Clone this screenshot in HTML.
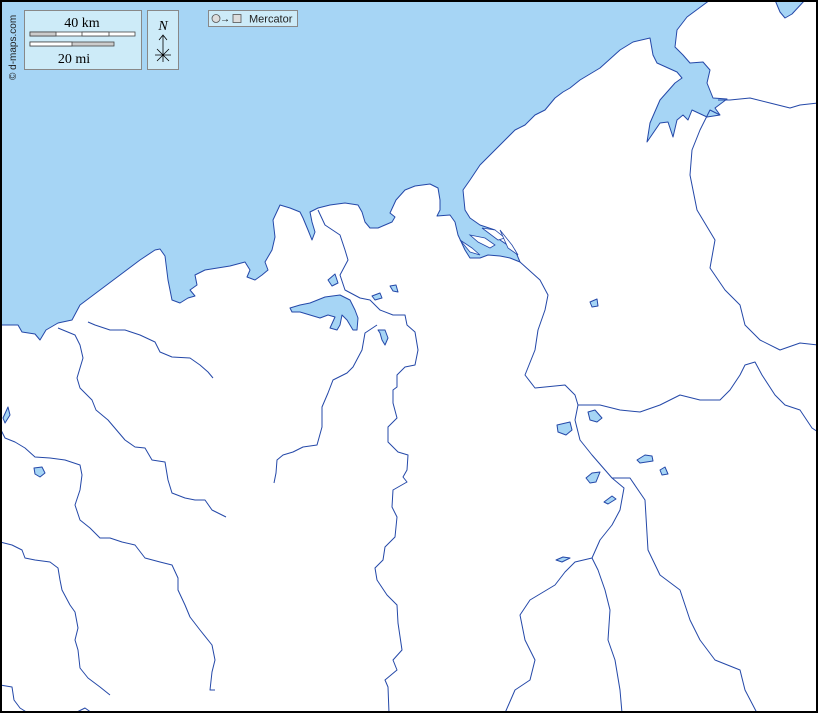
<!DOCTYPE html>
<html><head><meta charset="utf-8"><style>
html,body{margin:0;padding:0;background:#fff}
svg{display:block}
</style></head><body>
<svg width="818" height="713" viewBox="0 0 818 713" xmlns="http://www.w3.org/2000/svg">
<rect width="818" height="713" fill="#fff"/>
<g fill="#a6d5f5" stroke="#2448a8" stroke-width="1" stroke-linejoin="round">
<path d="M0,0 L0,325 L18,325 L22,332 L35,334 L40,340 L46,330 L58,323 L72,320 L80,305 L100,290 L120,275 L140,260 L155,250 L160,249 L165,256 L168,280 L172,300 L180,303 L188,298 L195,296 L190,290 L197,285 L195,275 L205,270 L230,266 L245,262 L250,270 L247,277 L255,280 L262,275 L268,270 L265,262 L272,250 L275,237 L273,220 L280,205 L290,208 L300,212 L303,218 L308,230 L312,240 L315,232 L312,222 L310,212 L318,208 L330,205 L345,203 L358,205 L362,212 L365,222 L370,228 L378,228 L385,225 L392,222 L395,217 L390,213 L396,200 L405,190 L415,186 L430,184 L438,188 L440,200 L440,210 L437,216 L450,215 L455,222 L458,235 L465,250 L470,258 L480,258 L488,255 L500,256 L510,258 L520,262 L515,250 L500,240 L495,230 L480,225 L470,218 L465,210 L463,190 L470,180 L480,165 L490,155 L505,140 L515,130 L525,125 L535,115 L545,110 L555,98 L563,92 L570,88 L580,80 L600,68 L620,50 L633,42 L650,38 L653,55 L657,63 L677,72 L682,78 L675,83 L660,100 L650,123 L647,142 L660,123 L668,122 L673,137 L677,120 L683,115 L688,120 L692,110 L707,117 L720,115 L715,108 L727,99 L713,98 L707,83 L710,70 L703,62 L690,63 L683,55 L675,47 L677,30 L687,17 L710,0 Z"/>
<path d="M775,0 L780,12 L785,18 L792,14 L805,0 Z"/>
<path d="M290,308 L300,305 L310,303 L325,297 L340,295 L350,300 L355,310 L358,318 L357,330 L353,330 L347,320 L342,315 L340,325 L337,330 L330,328 L335,317 L328,315 L320,318 L310,315 L300,312 L292,312 Z"/>
<path d="M378,330 L385,330 L388,338 L385,345 L382,340 L380,333 Z"/>
<path d="M8,407 L10,415 L5,423 L3,418 Z"/>
<path d="M34,468 L42,467 L45,473 L40,477 L35,474 Z"/>
<path d="M328,280 L335,274 L338,283 L332,286 Z"/>
<path d="M372,296 L380,293 L382,298 L375,300 Z"/>
<path d="M390,286 L396,285 L398,292 L393,291 Z"/>
<path d="M590,302 L597,299 L598,306 L592,307 Z"/>
<path d="M588,412 L595,410 L602,418 L597,422 L590,420 Z"/>
<path d="M557,425 L570,422 L572,430 L566,435 L558,432 Z"/>
<path d="M637,460 L645,455 L652,456 L653,461 L640,463 Z"/>
<path d="M660,470 L665,467 L668,474 L662,475 Z"/>
<path d="M586,478 L592,473 L600,472 L596,482 L590,483 Z"/>
<path d="M604,502 L612,496 L616,499 L608,504 Z"/>
<path d="M556,560 L563,557 L570,558 L562,562 Z"/>
</g>
<g fill="#fff" stroke="#2448a8" stroke-width="0.8">
<path d="M470,235 L485,238 L495,245 L490,248 L478,242 Z"/>
<path d="M482,228 L495,230 L505,238 L498,240 Z"/>
<path d="M460,240 L472,248 L480,255 L470,252 Z"/>
<path d="M500,230 L512,245 L518,255 L508,248 Z"/>
</g>
<g fill="none" stroke="#2448a8" stroke-width="1" stroke-linejoin="round">
<polyline points="58,328 75,335 80,345 83,358 77,378 80,388 92,400 96,410 108,420 125,440 135,447 145,448 152,460 165,462 168,480 172,493 185,498 195,500 205,500 212,510 226,517"/>
<polyline points="88,322 95,325 110,330 125,330 140,335 155,342 160,352 172,357 190,358 200,365 208,372 213,378"/>
<polyline points="0,428 5,438 15,442 25,448 35,457 50,458 65,460 80,465 82,475 80,490 75,505 80,520 90,528 100,538 110,538 122,542 135,545 145,558 160,562 172,565 178,578 178,590 185,605 190,617 200,630 212,645 215,660 212,672 210,690 215,690"/>
<polyline points="0,542 12,545 22,550 25,558 35,560 50,562 58,568 60,580 62,590 70,605 75,612 78,628 75,640 78,650 80,668 88,678 100,687 110,695"/>
<polyline points="0,685 12,687 14,700 20,708 28,713"/>
<polyline points="75,713 85,708 92,713"/>
<polyline points="377,325 365,333 362,350 353,367 347,373 333,380 328,393 322,407 322,427 317,445 303,447 293,452 283,455 277,460 276,473 274,483"/>
<polyline points="318,210 325,225 340,235 345,250 348,260 340,275 345,290 360,298 370,300 380,310 393,315 405,315 407,325 415,332 418,350 415,365 405,367 397,375 397,387 393,390 393,403 397,418 388,427 388,442 398,452 408,455 407,470 403,477 407,482 393,490 392,507 397,517 395,537 385,547 383,560 375,568 377,580 387,595 397,605 398,623 402,650 393,660 397,670 385,680 388,687 389,713"/>
<polyline points="520,262 540,280 548,295 545,310 538,330 535,350 525,375 535,388 565,385 575,395 578,405 575,420 580,440 592,455 612,478 624,488 620,510 612,525 600,540 592,558 575,562 565,572 555,585 530,600 520,615 525,640 535,660 530,680 515,690 505,713"/>
<polyline points="592,558 598,570 605,590 610,610 608,640 615,660 620,690 622,713"/>
<polyline points="612,478 630,478 645,500 648,550 660,575 680,590 690,620 700,640 715,660 740,670 745,690 757,713"/>
<polyline points="578,405 600,405 620,410 640,412 660,405 680,395 700,400 720,400 730,390 740,375 745,365 755,362 762,375 775,395 785,405 800,410 812,428 818,432"/>
<polyline points="720,115 710,110 700,130 692,150 690,175 697,210 715,240 710,268 725,290 740,305 745,325 760,340 780,350 800,343 818,345"/>
<polyline points="718,100 730,100 750,98 770,103 790,108 800,105 818,103"/>
</g>
<g font-family="Liberation Serif, serif" fill="#000">
<rect x="24.5" y="10.5" width="117" height="59" fill="#cdebf8" stroke="#888"/>
<text x="82" y="27" font-size="14" text-anchor="middle">40 km</text>
<rect x="30" y="32" width="105" height="4" fill="#fff" stroke="#444" stroke-width="0.8"/>
<rect x="30" y="32" width="26" height="4" fill="#ccc" stroke="#444" stroke-width="0.8"/>
<rect x="82" y="32" width="27" height="4" fill="#fff" stroke="#444" stroke-width="0.8"/>
<rect x="30" y="42" width="84" height="4" fill="#ccc" stroke="#444" stroke-width="0.8"/>
<rect x="30" y="42" width="42" height="4" fill="#fff" stroke="#444" stroke-width="0.8"/>
<text x="74" y="63" font-size="14" text-anchor="middle">20 mi</text>
<rect x="147.5" y="10.5" width="31" height="59" fill="#cdebf8" stroke="#888"/>
<text x="163" y="30" font-size="14" font-style="italic" text-anchor="middle">N</text>
<path d="M163,36 V62 M159,40 L163,35 L167,40 M155,55 H171 M157,49 L169,61 M169,49 L157,61" stroke="#000" stroke-width="0.8" fill="none"/>
<rect x="208.5" y="10.5" width="89" height="16" fill="#cdebf8" stroke="#888"/>
<circle cx="216" cy="18.5" r="4" fill="#ddd" stroke="#555" stroke-width="0.8"/>
<text x="220" y="22" font-size="10" font-family="Liberation Sans, sans-serif">→</text>
<rect x="233" y="14.5" width="8" height="8" fill="#ddd" stroke="#555" stroke-width="0.8"/>
<text x="249" y="22.5" font-size="11" font-family="Liberation Sans, sans-serif" fill="#222">Mercator</text>
<text transform="translate(16,80) rotate(-90)" font-size="10" font-family="Liberation Sans, sans-serif" fill="#222">© d-maps.com</text>
</g>
<rect x="1" y="1" width="816" height="711" fill="none" stroke="#000" stroke-width="2"/>
</svg>
</body></html>
